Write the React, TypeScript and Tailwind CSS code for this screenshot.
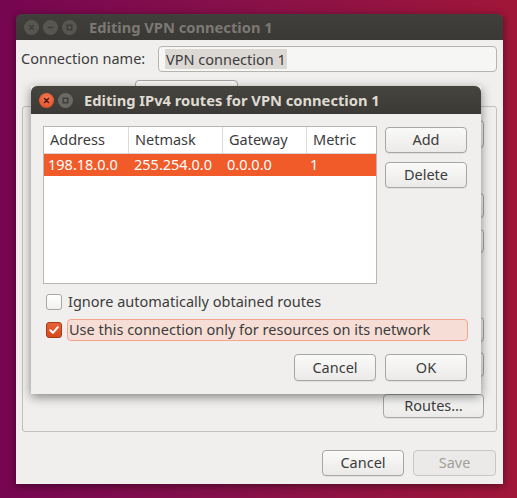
import React from "react";

const font = { fontFamily: '"Noto Sans", "Open Sans", sans-serif' };

function Btn({ children, className = "", disabled = false }: { children?: React.ReactNode; className?: string; disabled?: boolean }) {
  return (
    <div
      className={
        "flex items-center justify-center rounded-[4px] border text-[14.5px] " +
        (disabled
          ? "border-[#c9c7c4] bg-[#ebeae8] text-[#a19f9b] "
          : "border-[#a8a6a2] bg-[linear-gradient(#fafaf9,#ebeae8)] text-[#3c3c3c] shadow-[0_1px_0_rgba(0,0,0,0.06)] ") +
        className
      }
    >
      {children}
    </div>
  );
}

function TitleCircle({ kind, active = false }: { kind: "close" | "min" | "max"; active?: boolean }) {
  const red = active && kind === "close";
  return (
    <div
      className={
        "w-[15px] h-[15px] rounded-full flex items-center justify-center " +
        (red
          ? "bg-[radial-gradient(circle_at_50%_35%,#f47b55,#e0461c)]"
          : active
          ? "bg-[#6a6964]"
          : "bg-[#575651]")
      }
    >
      <svg width="9" height="9" viewBox="0 0 9 9">
        {kind === "close" && (
          <path d="M2.5 2.5 L6.5 6.5 M6.5 2.5 L2.5 6.5" stroke={red ? "#3a1208" : "#3c3b37"} strokeWidth="1.3" strokeLinecap="round" />
        )}
        {kind === "min" && <path d="M1.8 4.5 H7.2" stroke="#3c3b37" strokeWidth="1.4" />}
        {kind === "max" && (
          <rect x="2.2" y="2.2" width="4.6" height="4.6" fill="none" stroke="#3c3b37" strokeWidth="1.3" />
        )}
      </svg>
    </div>
  );
}

function Check({ checked }: { checked?: boolean }) {
  return checked ? (
    <div className="w-[16px] h-[16px] rounded-[3px] border border-[#a63a14] bg-[linear-gradient(#e8623a,#d54a1c)] flex items-center justify-center">
      <svg width="12" height="12" viewBox="0 0 12 12">
        <path d="M2.3 6.3 L4.9 8.8 L9.8 3.2" fill="none" stroke="#fff" strokeWidth="2" strokeLinecap="round" strokeLinejoin="round" />
      </svg>
    </div>
  ) : (
    <div className="w-[16px] h-[16px] rounded-[3px] border border-[#a9a7a3] bg-[linear-gradient(#ffffff,#f1f0ee)]" />
  );
}

export default function App() {
  return (
    <div
      style={font}
      className="relative w-[517px] h-[498px] overflow-hidden bg-[linear-gradient(90deg,#760651_0%,#86104a_45%,#a01638_100%)]"
    >
      {/* Outer window */}
      <div className="absolute left-[16px] top-[14px] w-[487px] h-[470px] flex flex-col shadow-[0_2px_8px_rgba(0,0,0,0.45)]">
        <div className="h-[26px] rounded-t-[6px] bg-[linear-gradient(#403f3b,#3a3935)] flex items-center pl-[8px]">
          <div className="flex gap-[4px]">
            <TitleCircle kind="close" />
            <TitleCircle kind="min" />
            <TitleCircle kind="max" />
          </div>
          <div className="ml-[12px] text-[14.7px] font-bold text-[#7b7974]">Editing VPN connection 1</div>
        </div>
        <div className="flex-1 bg-[#f0efed] flex flex-col text-[#3c3c3c]">
          <div className="mt-[6px] flex items-center pl-[5px] pr-[6px]">
            <div className="w-[137px] text-[14.5px]">Connection name:</div>
            <div className="flex-1 h-[26px] rounded-[4px] border border-[#b6b4b0] bg-[#f6f6f5] flex items-center pl-[6px]">
              <span className="bg-[#dcd8d4] text-[14.5px] px-[1px] leading-[20px]">VPN connection 1</span>
            </div>
          </div>
          <div className="mt-[8px] h-[26px] pl-[119px]">
            <Btn className="w-[103px] h-[30px]" />
          </div>
          <div className="ml-[6px] mr-[6px] h-[326px] rounded-[3px] border border-[#c2c0bc] flex flex-col items-end pr-[12px]">
            <Btn className="mt-[13px] w-[90px] h-[28px]" />
            <Btn className="mt-[45px] w-[90px] h-[25px]" />
            <Btn className="mt-[11px] w-[90px] h-[24px]" />
            <Btn className="mt-[64px] w-[90px] h-[25px]" />
            <Btn className="mt-[10px] w-[90px] h-[25px]" />
            <Btn className="mt-[17px] w-[101px] h-[24px]">Routes…</Btn>
          </div>
          <div className="mt-[18px] flex justify-end gap-[9px] pr-[7px]">
            <Btn className="w-[82px] h-[26px]">Cancel</Btn>
            <Btn disabled className="w-[83px] h-[26px]">Save</Btn>
          </div>
        </div>
      </div>

      {/* Inner dialog */}
      <div className="absolute left-[31px] top-[86px] w-[450px] h-[308px] flex flex-col shadow-[0_3px_10px_rgba(0,0,0,0.45)]">
        <div className="h-[28px] rounded-t-[6px] bg-[linear-gradient(#45443f,#3b3a36)] flex items-center pl-[8px]">
          <div className="flex gap-[4px]">
            <TitleCircle kind="close" active />
            <TitleCircle kind="max" active />
          </div>
          <div className="ml-[11px] text-[14.7px] font-bold text-[#dfdbd2]">Editing IPv4 routes for VPN connection 1</div>
        </div>
        <div className="flex-1 bg-[#f0efed] flex flex-col text-[#3c3c3c] px-[12px] pt-[12px]">
          <div className="flex">
            <div className="w-[334px] h-[158px] border border-[#b9b7b3] bg-white flex flex-col">
              <div className="h-[27px] flex border-b border-[#d8d6d3] text-[14.5px]">
                <div className="w-[85px] pl-[6px] flex items-center border-r border-[#dcdad7]">Address</div>
                <div className="w-[94px] pl-[6px] flex items-center border-r border-[#dcdad7]">Netmask</div>
                <div className="w-[84px] pl-[6px] flex items-center border-r border-[#dcdad7]">Gateway</div>
                <div className="flex-1 pl-[6px] flex items-center">Metric</div>
              </div>
              <div className="h-[22px] flex bg-[#f15b29] text-white text-[14.5px]">
                <div className="w-[86px] pl-[4px] flex items-center">198.18.0.0</div>
                <div className="w-[94px] pl-[4px] flex items-center">255.254.0.0</div>
                <div className="w-[84px] pl-[3px] flex items-center">0.0.0.0</div>
                <div className="flex-1 pl-[2px] flex items-center">1</div>
              </div>
            </div>
            <div className="ml-[8px] flex flex-col gap-[9px] pt-[1px]">
              <Btn className="w-[82px] h-[26px]">Add</Btn>
              <Btn className="w-[82px] h-[26px]">Delete</Btn>
            </div>
          </div>
          <div className="mt-[10px] flex items-center h-[16px] pl-[3px] text-[14.5px]">
            <Check />
            <span className="ml-[6px]">Ignore automatically obtained routes</span>
          </div>
          <div className="mt-[9px] flex items-center h-[22px] pl-[3px] text-[14.5px]">
            <Check checked />
            <div className="ml-[5px] w-[401px] h-[22px] rounded-[4px] border border-[#f4a58c] bg-[#f6ded6] flex items-center pl-[1px]">
              Use this connection only for resources on its network
            </div>
          </div>
          <div className="mt-[13px] flex justify-end gap-[9px] pr-[2px]">
            <Btn className="w-[82px] h-[27px]">Cancel</Btn>
            <Btn className="w-[82px] h-[27px]">OK</Btn>
          </div>
        </div>
      </div>
    </div>
  );
}
